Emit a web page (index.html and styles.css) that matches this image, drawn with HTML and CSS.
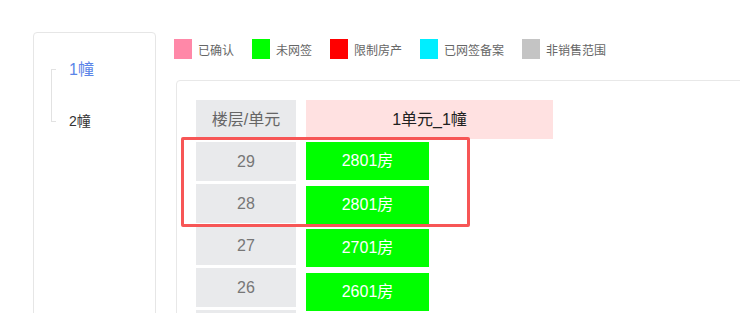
FILE: index.html
```html
<!DOCTYPE html>
<html>
<head>
  <title>楼盘销控表</title>
  <meta charset="UTF-8" />
  <link rel="stylesheet" href="styles.css">
</head>
<body>
  <div class="page">
    <!-- building list -->
    <aside class="sidebar">
      <div class="tree-line"></div>
      <ul class="tree-list">
        <li class="tree-item active">1幢</li>
        <li class="tree-item">2幢</li>
      </ul>
    </aside>

    <main class="main">
      <!-- status legend -->
      <ul class="legend">
        <li><span class="swatch confirmed"></span>已确认</li>
        <li><span class="swatch unsigned"></span>未网签</li>
        <li><span class="swatch limited"></span>限制房产</li>
        <li><span class="swatch filed"></span>已网签备案</li>
        <li><span class="swatch nosale"></span>非销售范围</li>
      </ul>

      <div class="board">
        <div class="grid">
          <div class="head floor-head">楼层/单元</div>
          <div class="head unit-head">1单元_1幢</div>

          <div class="floors">
            <div class="floor">29</div>
            <div class="floor">28</div>
            <div class="floor">27</div>
            <div class="floor">26</div>
            <div class="floor"></div>
          </div>
          <div class="rooms">
            <div class="room">2801房</div>
            <div class="room">2801房</div>
            <div class="room">2701房</div>
            <div class="room">2601房</div>
            <div class="room"></div>
          </div>
        </div>

        <div class="highlight"></div>
      </div>
    </main>
  </div>
</body>
</html>
```

FILE: styles.css
```css
html, body { margin: 0; overflow: hidden; background: #fff; }
body {
  font-family: "Liberation Sans", "Noto Sans CJK SC", sans-serif;
  color: #333;
}
ul { list-style: none; margin: 0; padding: 0; }

.page { display: flex; align-items: flex-start; height: 313px; }

.sidebar {
  display: flex;
  align-items: flex-start;
  flex: none;
  width: 123px;
  height: 400px;
  margin: 32px 0 0 33px;
  padding: 25px 0 0 17px;
  box-sizing: border-box;
  border: 1px solid #e6e6e6;
  border-radius: 4px;
}
.tree-line {
  width: 4px;
  height: 51px;
  margin-top: 11px;
  border: 1px solid #e2e2e2;
  border-right: 0;
}
.tree-list { margin-left: 13px; }
.tree-item {
  height: 24px;
  line-height: 24px;
  font-size: 14px;
  color: #333;
  margin-bottom: 27px;
}
.tree-item.active { font-size: 16px; color: #5b85e8; }

.main { flex: none; width: 640px; margin-left: 20px; }

.legend {
  display: flex;
  margin: 39px 0 0 -2px;
  height: 20px;
}
.legend li {
  display: flex;
  align-items: center;
  font-size: 12px;
  color: #666;
  margin-right: 18px;
}
.swatch { width: 18px; height: 20px; margin-right: 6px; }
.confirmed { background: #ff88a8; }
.unsigned { background: #00ff00; }
.limited { background: #ff0000; }
.filed { background: #00eeff; }
.nosale { background: #c4c4c4; }

.board {
  position: relative;
  margin-top: 21px;
  height: 400px;
  padding: 19px 0 0 19px;
  border: 1px solid #e8e8e8;
  border-radius: 4px;
}

.grid {
  display: grid;
  grid-template-columns: 100px 247px;
  column-gap: 10px;
  row-gap: 3px;
  font-size: 16px;
}
.head {
  height: 39px;
  line-height: 39px;
  text-align: center;
}
.floor-head { background: #e9eaec; color: #666; }
.unit-head { background: #ffe1e1; color: #222; }

.floors, .rooms { display: flex; flex-direction: column; }
.floors { gap: 3px; }
.rooms { gap: 5.5px; }
.floor {
  height: 39px;
  line-height: 39px;
  text-align: center;
  background: #e9eaec;
  color: #777;
}
.room {
  width: 123px;
  height: 38px;
  line-height: 38px;
  text-align: center;
  background: #00ff00;
  color: #fff;
}

/* annotation box drawn over the first two floors */
.highlight {
  position: absolute;
  left: 4px;
  top: 56px;
  width: 289px;
  height: 90px;
  box-sizing: border-box;
  border: 3px solid #f75656;
  border-radius: 2px;
}
```
